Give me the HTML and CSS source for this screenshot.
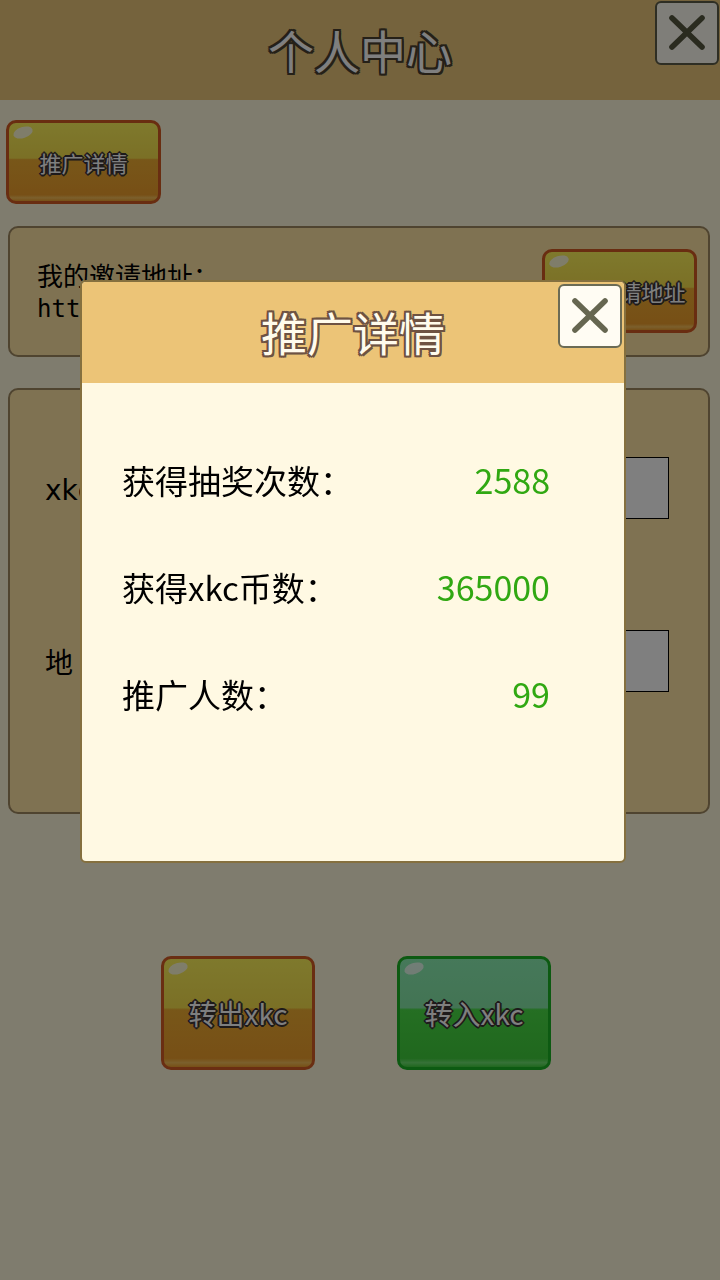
FILE: index.html
```html
<!DOCTYPE html>
<html lang="zh-CN">
<head>
<meta charset="utf-8">
<title>个人中心</title>
<link rel="stylesheet" href="styles.css">
</head>
<body>
<div class="page">
  <header class="topbar">
    <span class="topbar-spacer"></span>
    <h1 class="title">个人中心</h1>
    <button class="close close-top" aria-label="关闭">
      <svg viewBox="0 0 64 64" class="close-icon"><path d="M16 16 L48 47 M48 16 L16 47"/></svg>
    </button>
  </header>
  <main class="content">
    <button class="btn btn-orange btn-detail"><span class="btn-text">推广详情</span></button>
    <section class="panel invite">
      <div class="invite-text">
        <p class="invite-label">我的邀请地址：</p>
        <p class="invite-url">http://xkc.game/invite?uid=1024</p>
      </div>
      <button class="btn btn-orange btn-copy"><span class="btn-text">复制邀请地址</span></button>
    </section>
    <section class="panel transfer">
      <div class="field"><span class="field-label">xkc数量：</span><span class="field-input"></span></div>
      <div class="field"><span class="field-label">地 址：</span><span class="field-input"></span></div>
    </section>
    <div class="actions">
      <button class="btn btn-orange btn-big"><span class="btn-text">转出xkc</span></button>
      <button class="btn btn-green btn-big"><span class="btn-text">转入xkc</span></button>
    </div>
  </main>
</div>
<div class="overlay">
  <div class="modal">
    <div class="modal-head">
      <h2 class="modal-title">推广详情</h2>
      <button class="close close-modal" aria-label="关闭">
        <svg viewBox="0 0 64 64" class="close-icon"><path d="M16 16 L48 47 M48 16 L16 47"/></svg>
      </button>
    </div>
    <div class="modal-body">
      <div class="stat"><span class="stat-label">获得抽奖次数：</span><span class="stat-value">2588</span></div>
      <div class="stat"><span class="stat-label">获得xkc币数：</span><span class="stat-value">365000</span></div>
      <div class="stat"><span class="stat-label">推广人数：</span><span class="stat-value">99</span></div>
    </div>
  </div>
</div>
</body>
</html>
```
FILE: styles.css
```css
* { box-sizing: border-box; }
html, body { margin: 0; padding: 0; }
body {
  width: 720px;
  min-height: 1280px;
  background: #fef8dc;
  font-family: "Noto Sans CJK SC", "Noto Sans", sans-serif;
  color: #000;
  overflow: hidden;
}
p, h1, h2 { margin: 0; font-weight: normal; }
button { font-family: inherit; padding: 0; cursor: pointer; }

.page { min-height: 1280px; }

.topbar {
  height: 100px;
  background: #eac67a;
  display: grid;
  grid-template-columns: 1fr auto 1fr;
  align-items: center;
}
.title {
  font-size: 46px;
  line-height: 1;
  color: #ffffff;
  margin-top: -3px;
  text-shadow:
    2px 0 0 #4a4030, -2px 0 0 #4a4030, 0 2px 0 #4a4030, 0 -2px 0 #4a4030,
    2px 2px 0 #4a4030, -2px -2px 0 #4a4030, 2px -2px 0 #4a4030, -2px 2px 0 #4a4030;
}

.close {
  width: 64px;
  height: 64px;
  background: #fffcf3;
  border: 2px solid #5c5c48;
  border-radius: 6px;
  display: flex;
  align-items: center;
  justify-content: center;
}
.close-icon { width: 60px; height: 60px; }
.close-icon path {
  fill: none;
  stroke: #666650;
  stroke-width: 6;
  stroke-linecap: round;
}
.close-top {
  justify-self: end;
  align-self: start;
  margin-top: 1px;
  margin-right: 1px;
}
.close-top .close-icon path { stroke: #55563f; }

.content {
  display: flex;
  flex-direction: column;
}

.btn {
  position: relative;
  border-radius: 10px;
  border: 3px solid #d25a22;
  display: flex;
  align-items: center;
  justify-content: center;
  overflow: hidden;
}
.btn::before {
  content: "";
  position: absolute;
  left: 4px;
  top: 4px;
  width: 20px;
  height: 11px;
  border-radius: 50%;
  background: rgba(255, 255, 255, 0.75);
  transform: rotate(-18deg);
}
.btn-orange {
  background: linear-gradient(#fef35a 0%, #f6e04c 45%, #f0ae32 47%, #ef9f2c 92%, #f7c05a 96%, #ef9f2c 100%);
}
.btn-green {
  border-color: #1ab424;
  background: linear-gradient(#8cf2b4 0%, #86e8a8 45%, #4ade46 47%, #40d03c 92%, #6ee470 96%, #40d03c 100%);
}
.btn-text {
  color: #ffffff;
  text-shadow:
    2px 0 0 #3c3436, -2px 0 0 #3c3436, 0 2px 0 #3c3436, 0 -2px 0 #3c3436,
    1px 1px 0 #3c3436, -1px -1px 0 #3c3436, 1px -1px 0 #3c3436, -1px 1px 0 #3c3436;
  line-height: 1;
}
.btn-detail {
  align-self: flex-start;
  width: 155px;
  height: 84px;
  margin: 20px 0 0 6px;
}
.btn-detail .btn-text, .btn-copy .btn-text { font-size: 22px; }

.panel {
  margin: 0 10px 0 8px;
  background: #ffe4a4;
  border: 2px solid #9e8860;
  border-radius: 10px;
}
.invite {
  margin-top: 22px;
  height: 131px;
  display: flex;
  align-items: center;
  justify-content: space-between;
  padding: 0 11px 0 27px;
}
.invite-text { overflow: hidden; width: 300px; }
.invite-label { font-size: 26px; line-height: 35px; }
.invite-url {
  font-family: "DejaVu Sans Mono", "Liberation Mono", monospace;
  font-size: 24px;
  line-height: 35px;
  white-space: nowrap;
}
.btn-copy {
  width: 155px;
  height: 84px;
  margin-bottom: 2px;
}

.transfer {
  margin-top: 31px;
  height: 426px;
  padding: 67px 39px 0 35px;
  display: flex;
  flex-direction: column;
  gap: 111px;
}
.field {
  display: flex;
  align-items: center;
  height: 62px;
}
.field-label {
  font-family: "DejaVu Sans", "Noto Sans CJK SC", sans-serif;
  font-size: 28px;
  width: 170px;
  white-space: nowrap;
}
.field-input {
  flex: 1;
  height: 62px;
  background: #ffffff;
  border: 1px solid #000;
}

.actions {
  margin-top: 142px;
  display: flex;
  justify-content: center;
  gap: 82px;
  padding-right: 8px;
}
.btn-big { width: 154px; height: 114px; }
.btn-big .btn-text { font-size: 28px; }
.btn-big.btn-orange { border-color: #d45c24; }

.overlay {
  position: fixed;
  inset: 0;
  background: rgba(0, 0, 0, 0.5);
  padding: 280px 0 0 80px;
}
.modal {
  width: 546px;
  height: 583px;
  border: 2px solid #85703f;
  border-radius: 6px;
  background: #fff9e3;
  overflow: hidden;
}
.modal-head {
  position: relative;
  height: 101px;
  background: #ecc477;
  display: flex;
  align-items: center;
  justify-content: center;
}
.modal-title {
  font-size: 46px;
  line-height: 1;
  color: #fffbec;
  margin-top: -3px;
  text-shadow:
    2px 0 0 #6e5242, -2px 0 0 #6e5242, 0 2px 0 #6e5242, 0 -2px 0 #6e5242,
    2px 2px 0 #6e5242, -2px -2px 0 #6e5242, 2px -2px 0 #6e5242, -2px 2px 0 #6e5242;
}
.close-modal {
  position: absolute;
  top: 2px;
  right: 2px;
  border-color: #6b6b55;
}
.modal-body {
  padding: 43px 74px 0 40px;
}
.stat {
  height: 107px;
  display: flex;
  align-items: center;
  justify-content: space-between;
}
.stat-label { font-size: 33px; }
.stat-value { font-size: 34px; color: #30a812; }
```
